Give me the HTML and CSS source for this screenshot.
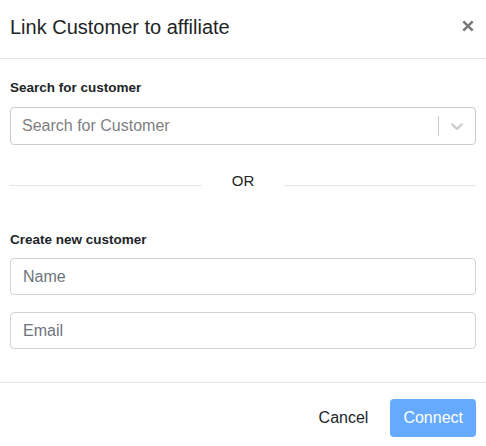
FILE: index.html
```html
<!DOCTYPE html>
<html lang="en">
<head>
<meta charset="utf-8">
<title>Link Customer to affiliate</title>
<link rel="stylesheet" href="styles.css">
</head>
<body>
<div class="modal">
  <div class="modal-header">
    <h5 class="modal-title">Link Customer to affiliate</h5>
    <button class="close" type="button" aria-label="Close">
      <svg width="12" height="12" viewBox="0 0 12 12"><path d="M1.3 1.3L10.7 10.7M10.7 1.3L1.3 10.7" stroke="#7a7a7a" stroke-width="2.6" stroke-linecap="butt"/></svg>
    </button>
  </div>
  <div class="modal-body">
    <div class="field-label">Search for customer</div>
    <div class="select">
      <div class="select-value">Search for Customer</div>
      <div class="select-indicators">
        <span class="select-sep"></span>
        <span class="select-arrow">
          <svg width="20" height="20" viewBox="0 0 20 20"><path fill="#cccccc" d="M4.516 7.548c0.436-0.446 1.043-0.481 1.576 0l3.908 3.747 3.908-3.747c0.533-0.481 1.141-0.446 1.574 0 0.436 0.445 0.408 1.197 0 1.615-0.406 0.418-4.695 4.502-4.695 4.502-0.217 0.223-0.502 0.335-0.787 0.335s-0.57-0.112-0.789-0.335c0 0-4.287-4.084-4.695-4.502s-0.436-1.170 0-1.615z"/></svg>
        </span>
      </div>
    </div>
    <div class="or-row">
      <span class="or-line"></span>
      <span class="or-text">OR</span>
      <span class="or-line"></span>
    </div>
    <div class="field-label label-create">Create new customer</div>
    <input class="text-input" type="text" placeholder="Name">
    <input class="text-input input-email" type="text" placeholder="Email">
  </div>
  <div class="modal-footer">
    <button class="btn-cancel" type="button">Cancel</button>
    <button class="btn-connect" type="button">Connect</button>
  </div>
</div>
</body>
</html>
```

FILE: styles.css
```css
* {
  box-sizing: border-box;
}

html, body {
  margin: 0;
  padding: 0;
  background: #ffffff;
}

body {
  font-family: "Liberation Sans", Arial, sans-serif;
  color: #212529;
}

.modal {
  width: 486px;
  height: 446px;
  overflow: hidden;
  background: #ffffff;
}

.modal-header {
  display: flex;
  justify-content: space-between;
  align-items: flex-start;
  padding: 15px 12px 19px 10px;
  border-bottom: 1px solid #e3e5e8;
}

.modal-title {
  margin: 0;
  font-size: 20px;
  line-height: 24px;
  font-weight: 400;
  color: #222426;
}

.close {
  display: block;
  margin: 5px 0 0 0;
  padding: 0;
  border: 0;
  background: transparent;
  width: 12px;
  height: 12px;
  line-height: 0;
}

.modal-body {
  padding: 21px 10px 33px 10px;
}

.field-label {
  font-size: 13.5px;
  line-height: 16px;
  font-weight: 700;
  color: #212529;
}

.select {
  margin-top: 11px;
  height: 38px;
  display: flex;
  align-items: center;
  border: 1px solid #cccccc;
  border-radius: 4px;
}

.select-value {
  flex: 1;
  padding: 0 10px 0 11px;
  font-size: 16px;
  color: #808080;
}

.select-indicators {
  display: flex;
  align-items: stretch;
  align-self: stretch;
}

.select-sep {
  width: 1px;
  margin: 8px 0;
  background: #cccccc;
}

.select-arrow {
  display: flex;
  align-items: center;
  padding: 0 8px;
}

.select-arrow svg {
  display: block;
}

.or-row {
  margin-top: 27px;
  display: flex;
  align-items: flex-start;
}

.or-line {
  flex: 1;
  height: 1px;
  margin-top: 13px;
  background: #e3e5e8;
}

.or-text {
  margin: 0 30px;
  font-size: 15px;
  line-height: 18px;
  color: #222426;
}

.label-create {
  margin-top: 42px;
}

.text-input {
  display: block;
  width: 100%;
  height: 37px;
  margin-top: 10px;
  padding: 0 12px;
  border: 1px solid #ced4da;
  border-radius: 4px;
  font-family: "Liberation Sans", Arial, sans-serif;
  font-size: 16px;
  color: #495057;
  background: #ffffff;
  outline: none;
}

.text-input::placeholder {
  color: #6c757d;
  opacity: 1;
}

.input-email {
  margin-top: 17px;
}

.modal-footer {
  display: flex;
  justify-content: flex-end;
  align-items: center;
  padding: 16px 10px 9px 10px;
  border-top: 1px solid #e3e5e8;
}

.btn-cancel {
  margin-right: 10px;
  padding: 0 12px;
  height: 38px;
  border: 0;
  background: transparent;
  font-family: "Liberation Sans", Arial, sans-serif;
  font-size: 16px;
  color: #212529;
}

.btn-connect {
  height: 38px;
  padding: 0 13px;
  border: 0;
  border-radius: 4px;
  background: #66aaff;
  font-family: "Liberation Sans", Arial, sans-serif;
  font-size: 16px;
  color: #ffffff;
}
```
